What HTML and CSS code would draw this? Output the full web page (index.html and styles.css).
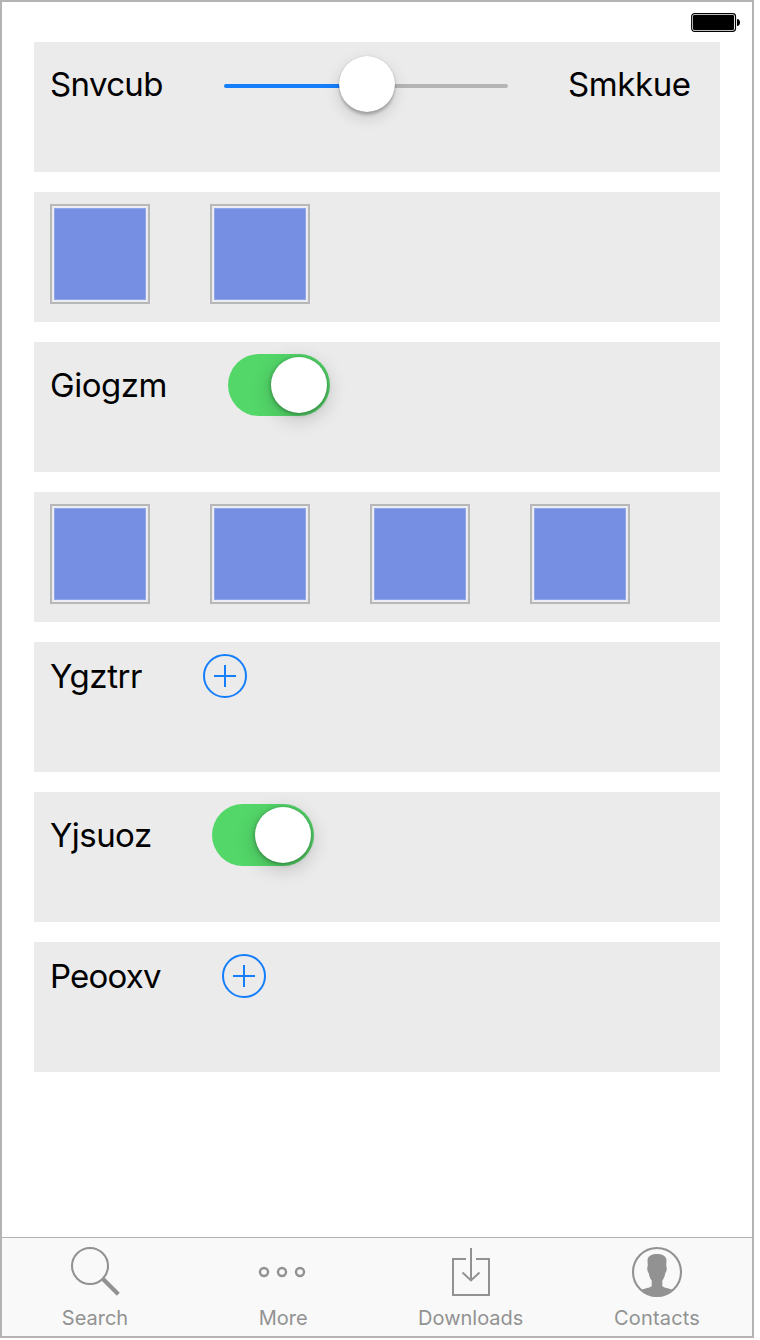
FILE: index.html
```
<!DOCTYPE html>
<html lang="en">
<head>
<meta charset="utf-8">
<title>Controls</title>
<link rel="stylesheet" href="styles.css">
</head>
<body>
<div class="screen">
  <header class="status">
    <svg class="battery" width="50" height="20" viewBox="0 0 50 20">
      <rect x=".7" y=".6" width="43.8" height="17.8" rx="2.8" fill="#fff" stroke="#000" stroke-width="1.2"/>
      <rect x="2" y="2" width="41" height="15" rx="1.2"/>
      <path d="M46 6c4 0 4 7 0 7z"/>
    </svg>
  </header>
  <main class="rows">
    <section class="row">
      <div class="line line-slider">
        <span class="label snvcub">Snvcub</span>
        <div class="slider"><div class="track"></div><div class="knob"></div></div>
        <span class="label smkkue">Smkkue</span>
      </div>
    </section>
    <section class="row">
      <div class="line"><div class="tile"></div><div class="tile"></div></div>
    </section>
    <section class="row">
      <div class="line">
        <span class="label giogzm">Giogzm</span>
        <div class="toggle"><div class="knob"></div></div>
      </div>
    </section>
    <section class="row">
      <div class="line"><div class="tile"></div><div class="tile"></div><div class="tile"></div><div class="tile"></div></div>
    </section>
    <section class="row">
      <div class="line">
        <span class="label ygztrr">Ygztrr</span>
        <svg class="add" width="44" height="44" viewBox="0 0 44 44"><circle cx="22" cy="22" r="21"/><path d="M11 22h22M22 11v22"/></svg>
      </div>
    </section>
    <section class="row">
      <div class="line">
        <span class="label yjsuoz">Yjsuoz</span>
        <div class="toggle"><div class="knob"></div></div>
      </div>
    </section>
    <section class="row">
      <div class="line">
        <span class="label peooxv">Peooxv</span>
        <svg class="add" width="44" height="44" viewBox="0 0 44 44"><circle cx="22" cy="22" r="21"/><path d="M11 22h22M22 11v22"/></svg>
      </div>
    </section>
  </main>
  <nav class="tabs">
    <div class="tab tab-search">
      <svg width="52" height="52" viewBox="0 0 52 52"><circle cx="21" cy="20" r="18" fill="none" stroke="#929292" stroke-width="2.1"/><path d="M33.5 32.5L49.3 48.3" stroke="#929292" stroke-width="4.2"/></svg>
      <span>Search</span>
    </div>
    <div class="tab">
      <svg width="52" height="52" viewBox="0 0 52 52"><g fill="none" stroke="#929292" stroke-width="2.4"><circle cx="7" cy="26" r="4"/><circle cx="25" cy="26" r="4"/><circle cx="43" cy="26" r="4"/></g></svg>
      <span>More</span>
    </div>
    <div class="tab">
      <svg width="52" height="52" viewBox="0 0 52 52"><path d="M21 13H8v36h36V13H31M26 2v33M17.500 26.500l8.500 8 8.500-8" fill="none" stroke="#929292" stroke-width="2"/></svg>
      <span>Downloads</span>
    </div>
    <div class="tab tab-contacts">
      <svg width="52" height="52" viewBox="0 0 52 52"><circle cx="26" cy="26" r="24" fill="none" stroke="#929292" stroke-width="2.1"/><path d="M26 8c-6 0-9.500 2.500-9.500 6.500l.3 5.500c-1 1-.6 6 .9 7 .5 3.500 1.800 6 3 7.500v5c0 2-5 2.500-9.700 4C15 48 20 50.500 26 50.500s11-2.500 15-7c-4.700-1.500-9.700-2-9.700-4v-5c1.200-1.500 2.500-4 3-7.500 1.500-1 1.900-6 .9-7l.3-5.500C35.500 10.500 32 8 26 8z" fill="#929292"/></svg>
      <span>Contacts</span>
    </div>
  </nav>
</div>
</body>
</html>
```
FILE: styles.css
```
* { box-sizing: border-box; }
body { margin: 0; background: #fff; font-family: Inter, "Liberation Sans", sans-serif; }
.screen { width: 754px; height: 1338px; border: 2px solid #b3b3b3; display: flex; flex-direction: column; }
.status { height: 40px; padding: 11px 11px 0 0; display: flex; justify-content: flex-end; align-items: flex-start; }
.rows { flex: 1; padding: 0 32px; display: flex; flex-direction: column; gap: 20px; }
.row { height: 130px; background: #ebebeb; padding: 12px 16px; }
.line { display: flex; align-items: center; gap: 60px; }
.line-slider { height: 60px; }
.label { font-size: 33px; line-height: 40px; color: #000; white-space: nowrap; flex: none; }
.snvcub { width: 114px; letter-spacing: -.65px; }
.smkkue { width: 124px; letter-spacing: -.4px; }
.giogzm { width: 118px; letter-spacing: -.45px; }
.ygztrr { width: 93px; letter-spacing: -.4px; }
.yjsuoz { width: 102px; letter-spacing: -.55px; }
.peooxv { width: 112px; letter-spacing: -.8px; }
.slider { width: 284px; height: 56px; display: grid; place-items: center; }
.slider > * { grid-area: 1 / 1; }
.slider .knob { margin-left: 2px; }
.track { width: 284px; height: 4px; margin-top: 4px; border-radius: 2px; background: linear-gradient(90deg, #157efb 50%, #b5b5b5 50%); }
.knob { width: 56px; height: 56px; border-radius: 50%; background: #fff; box-shadow: 0 0 1px rgba(0,0,0,.3), 0 3px 3px rgba(0,0,0,.22), 0 6px 16px rgba(0,0,0,.14); z-index: 1; }
.toggle { width: 102px; height: 62px; padding: 3px; border-radius: 31px; background: #53d769; display: flex; justify-content: flex-end; }
.toggle .knob { box-shadow: 0 1px 4px rgba(0,0,0,.35), 0 5px 20px rgba(0,0,0,.22); }
.tile { width: 100px; height: 100px; border: 2px solid #b8b8b8; background: #778fe2; box-shadow: inset 0 0 0 1px #ececec, inset 0 0 0 2px #eaeefb, inset 0 0 0 3px #90a4e8; }
.add { display: block; fill: none; stroke: #157efb; stroke-width: 2; }
.tabs { height: 99px; border-top: 1px solid #b2b2b2; background: #f9f9f9; display: grid; grid-template-columns: repeat(4, 187.5px); }
.tab { display: flex; flex-direction: column; align-items: center; padding-top: 8px; color: #929292; font-size: 20px; line-height: 24px; }
.tab-search { padding-right: 1.5px; }
.tab-contacts { padding-right: 2.5px; letter-spacing: .2px; }
.tab svg { display: block; margin-bottom: 8px; }
```
